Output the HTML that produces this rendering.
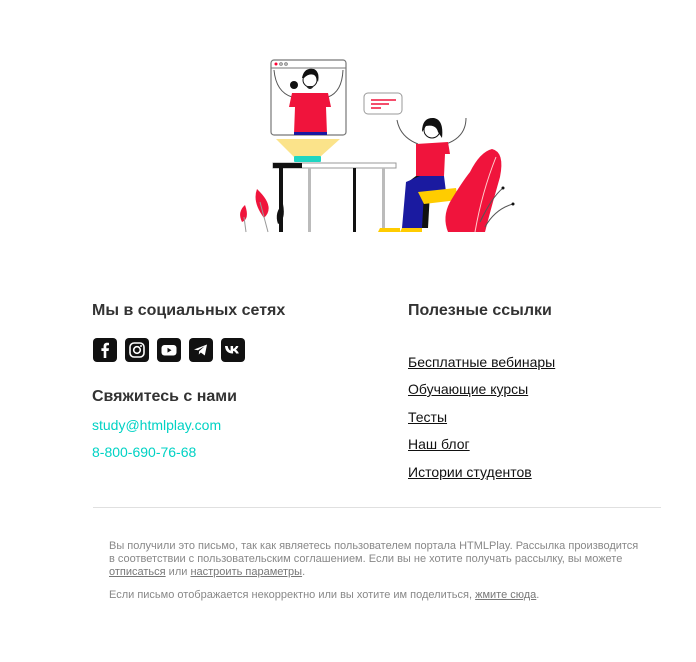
<!DOCTYPE html>
<html><head><meta charset="utf-8"><style>
body{margin:0;background:#fff;width:696px;height:662px;position:relative;font-family:"Liberation Sans",Arial,sans-serif;overflow:hidden}
.a{position:absolute;white-space:nowrap}
h3{margin:0;font-size:16px;font-weight:bold;color:#333}
.lnk{font-size:14px;color:#111;text-decoration:underline}
.ic{position:absolute;top:338px;width:24px;height:24px;background:#111;border-radius:4px}
.ft{font-size:11px;color:#888;line-height:13px;width:532px;white-space:normal}
.ft u{color:#777}
</style></head><body>
<svg class="a" style="left:230px;top:52px" width="290" height="185" viewBox="0 0 290 185">
<rect x="41" y="8" width="75" height="75" rx="3" fill="#fff" stroke="#777" stroke-width="1.2"/>
<line x1="41" y1="16" x2="116" y2="16" stroke="#777"/>
<circle cx="46" cy="12" r="1.5" fill="#f03"/><circle cx="51" cy="12" r="1.3" fill="none" stroke="#777"/><circle cx="56" cy="12" r="1.3" fill="none" stroke="#777"/>
<path d="M44 18 Q46 40 62 45 M113 18 Q112 40 98 45" stroke="#555" fill="none"/>
<path d="M62 41 L98 41 L101 55 L96 55 L97 82 L64 82 L65 55 L59 55Z" fill="#f0143c"/>
<rect x="64" y="80" width="33" height="3" fill="#1a1aa0"/>
<circle cx="80" cy="28" r="7" fill="#fff" stroke="#111"/><path d="M72 26 Q74 15 84 17 Q90 20 88 30 L86 24 Q80 20 74 26Z" fill="#111"/><circle cx="64" cy="33" r="4" fill="#111"/><path d="M76 34 Q80 40 84 34Z" fill="#222"/>
<path d="M46 87 L110 87 L90 105 L64 105Z" fill="#fbe38a"/>
<rect x="64" y="104" width="27" height="6" rx="1" fill="#1fd6c2"/>
<rect x="43" y="111" width="123" height="5" fill="#fff" stroke="#999"/>
<rect x="43" y="111" width="29" height="5" fill="#111"/>
<rect x="49" y="116" width="4" height="64" fill="#111"/>
<rect x="78" y="116" width="3" height="64" fill="#bbb"/>
<rect x="123" y="116" width="3" height="64" fill="#111"/>
<rect x="152" y="116" width="3" height="64" fill="#bbb"/>
<path d="M15 153 Q7 160 12 170 Q20 167 15 153Z" fill="#f0143c"/>
<path d="M27 137 Q22 150 34 166 Q46 155 27 137Z" fill="#f0143c"/>
<path d="M53 152 Q44 160 48 172 Q56 168 53 152Z" fill="#111"/>
<line x1="30" y1="150" x2="38" y2="180" stroke="#999"/><line x1="14" y1="165" x2="16" y2="180" stroke="#999"/>
<rect x="134" y="41" width="38" height="21" rx="4" fill="#fff" stroke="#999"/>
<path d="M141 48h25M141 52h18M141 56h10" stroke="#f0143c" stroke-width="1.4"/>
<path d="M167 68 Q170 85 188 92 M236 66 Q236 85 216 92" stroke="#555" fill="none"/>
<circle cx="202" cy="78" r="8" fill="#fff" stroke="#111"/><path d="M192 80 Q192 65 204 66 Q214 68 212 86 L208 80 Q206 72 196 74 Z" fill="#111"/>
<path d="M186 92 L218 90 L220 102 L215 102 L214 124 L186 124 Z" fill="#f0143c"/>
<path d="M186 124 L214 124 L214 140 L200 140 L198 176 L182 176 L178 130Z" fill="#111"/>
<path d="M190 124 L214 124 L216 140 L194 140 L192 176 L172 176 L176 130Z" fill="#1a1aa0"/>
<path d="M188 140 L226 136 L228 148 L194 152Z" fill="#ffcc00"/>
<path d="M150 176 L170 176 L170 180 L148 180Z" fill="#ffcc00"/><path d="M172 176 L192 176 L192 180 L170 180Z" fill="#ffcc00"/>
<path d="M262 97 Q275 100 270 125 Q260 160 255 180 L218 180 Q212 165 220 150 Q232 130 240 120 Q250 100 262 97Z" fill="#f0143c"/>
<path d="M245 180 Q252 140 266 105" stroke="#fcc" fill="none"/>
<path d="M250 170 Q262 145 273 136 M255 175 Q265 157 283 152" stroke="#555" fill="none"/>
<circle cx="273" cy="136" r="1.5" fill="#111"/><circle cx="283" cy="152" r="1.5" fill="#111"/>
</svg>

<h3 class="a" style="left:92px;top:302px">Мы в социальных сетях</h3>
<div class="ic" style="left:93px"><svg width="24" height="24"><path d="M13.3 20v-7h2.3l.4-2.7h-2.7V8.6c0-.8.2-1.3 1.3-1.3H16V4.9c-.3 0-1.1-.1-2-.1-2 0-3.4 1.2-3.4 3.5v2H8.4V13h2.3v7z" fill="#fff"/></svg></div>
<div class="ic" style="left:125px"><svg width="24" height="24"><rect x="5" y="5" width="14" height="14" rx="4" fill="none" stroke="#fff" stroke-width="1.6"/><circle cx="12" cy="12" r="3.3" fill="none" stroke="#fff" stroke-width="1.6"/><circle cx="16" cy="8" r="1" fill="#fff"/></svg></div>
<div class="ic" style="left:157px"><svg width="24" height="24"><rect x="4.5" y="7" width="15" height="10.5" rx="3" fill="#fff"/><path d="M10.5 9.8v4.8l4-2.4z" fill="#111"/></svg></div>
<div class="ic" style="left:189px"><svg width="24" height="24"><path d="M5 11.5l13-5-2.2 11-4-3-2 2 .3-3.2 5.4-5-6.6 4z" fill="#fff"/></svg></div>
<div class="ic" style="left:221px"><svg width="24" height="24"><path d="M4 8h2.6c.6 2.6 1.8 4.3 3 4.6V8h2.5v2.8c1.2-.1 2.4-1.5 2.9-2.8h2.4c-.4 1.8-1.7 3.1-2.6 3.7 1 .5 2.4 1.8 3 3.8h-2.7c-.5-1.4-1.6-2.5-3-2.6v2.6h-.3C7 15.5 4.2 12.7 4 8z" fill="#fff"/></svg></div>
<h3 class="a" style="left:92px;top:388px">Свяжитесь с нами</h3>
<div class="a" style="left:92px;top:417px;font-size:14px;color:#00d2c4">study@htmlplay.com</div>
<div class="a" style="left:92px;top:444px;font-size:14px;color:#00d2c4">8-800-690-76-68</div>

<h3 class="a" style="left:408px;top:302px">Полезные ссылки</h3>
<div class="a lnk" style="left:408px;top:354px">Бесплатные вебинары</div>
<div class="a lnk" style="left:408px;top:381px">Обучающие курсы</div>
<div class="a lnk" style="left:408px;top:409px">Тесты</div>
<div class="a lnk" style="left:408px;top:436px">Наш блог</div>
<div class="a lnk" style="left:408px;top:464px">Истории студентов</div>

<div class="a" style="left:93px;top:507px;width:568px;height:1px;background:#e0e0e0"></div>
<div class="a ft" style="left:109px;top:540px">Вы получили это письмо, так как являетесь пользователем портала HTMLPlay. Рассылка производится в соответствии с пользовательским соглашением. Если вы не хотите получать рассылку, вы можете <u>отписаться</u> или <u>настроить параметры</u>.</div>
<div class="a ft" style="left:109px;top:589px">Если письмо отображается некорректно или вы хотите им поделиться, <u>жмите сюда</u>.</div>
</body></html>
